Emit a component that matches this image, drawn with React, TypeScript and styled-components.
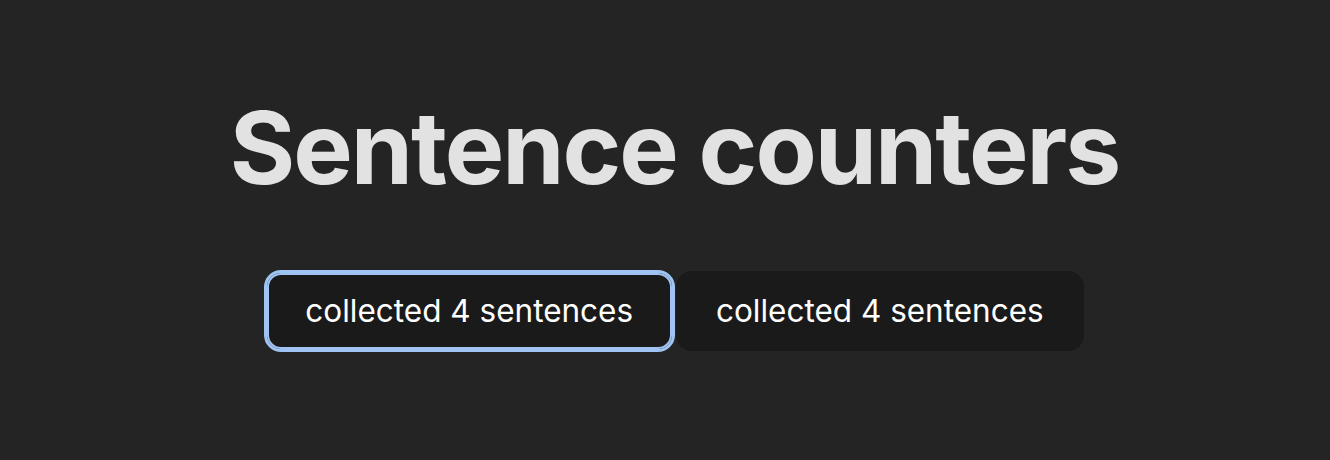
import React from "react";
import styled, { createGlobalStyle } from "styled-components";

const Global = createGlobalStyle`
  html, body { margin: 0; padding: 0; }
  body {
    background: #242424;
    color: rgba(255, 255, 255, 0.87);
    font-family: Inter, "Noto Sans", Helvetica, Arial, sans-serif;
    font-synthesis: none;
    -webkit-font-smoothing: antialiased;
  }
`;

const Page = styled.main`
  width: 1330px;
  height: 460px;
  box-sizing: border-box;
  display: flex;
  flex-direction: column;
  align-items: center;
  padding-top: 93px;
  padding-left: 19px;
`;

const Title = styled.h1`
  margin: 0;
  font-size: 100px;
  line-height: 1.1;
  letter-spacing: -2px;
  font-weight: 700;
  color: rgba(255, 255, 255, 0.87);
`;

const Row = styled.div`
  display: flex;
  gap: 2px;
  margin-top: 68px;
`;

const Counter = styled.button<{ $focused?: boolean }>`
  font-family: inherit;
  font-size: 31.5px;
  font-weight: 400;
  line-height: 37.6px;
  padding: 19.2px 38.4px;
  border-radius: 16px;
  border: 2px solid transparent;
  background: #1a1a1a;
  color: #ffffff;
  cursor: pointer;
  outline: ${(p) => (p.$focused ? "3px solid #9fc3f2" : "none")};
  outline-offset: -2px;
  box-shadow: ${(p) => (p.$focused ? "0 0 0 1px #101010, inset 0 0 0 2px #9fc3f2" : "none")};
`;

export default function App() {
  const [counts, setCounts] = React.useState([4, 4]);
  return (
    <>
      <Global />
      <Page>
        <Title>Sentence counters</Title>
        <Row>
          {counts.map((c, i) => (
            <Counter
              key={i}
              $focused={i === 0}
              onClick={() => setCounts((prev) => prev.map((v, j) => (j === i ? v + 1 : v)))}
            >
              collected {c} sentences
            </Counter>
          ))}
        </Row>
      </Page>
    </>
  );
}
